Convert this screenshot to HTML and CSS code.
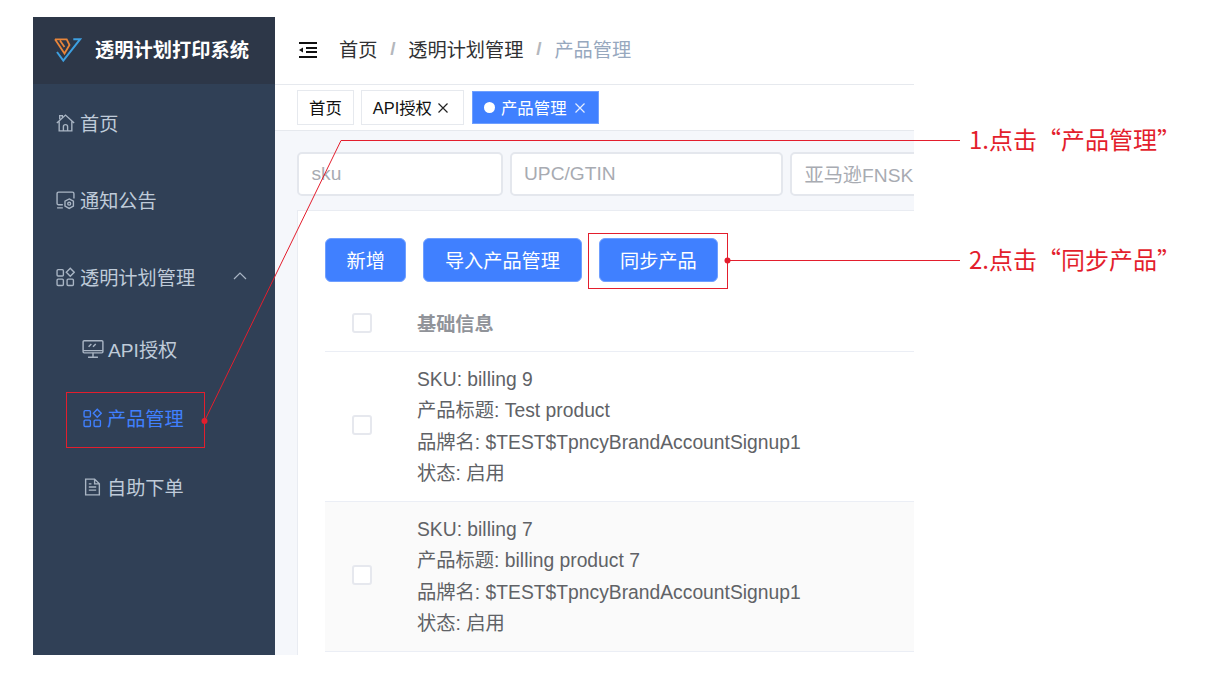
FILE: index.html
```html
<!DOCTYPE html>
<html lang="zh-CN">
<head>
<meta charset="utf-8">
<title>透明计划打印系统</title>
<link rel="stylesheet" href="styles.css">
</head>
<body>
<div class="app">
  <aside class="sidebar">
    <div class="brand">
      <svg class="brand-logo" viewBox="0 0 28 26" width="28" height="26"><path d="M1 1.3H12.7L15.5 7L10.5 15.5L1 1.3M6 2.5L10.5 9" fill="none" stroke="#e8853a" stroke-width="1.8"/><path d="M3 14L9.3 22.5L26 1.3H19.3" fill="none" stroke="#3d9fe0" stroke-width="2"/></svg>
      <span class="brand-title">透明计划打印系统</span>
    </div>
    <nav class="menu">
      <div class="menu-item"><svg class="mi" viewBox="0 0 18 18"><path d="M.8 9L9 1.5L17.2 9M3.5 5.5V2H6V3.5M3 7.5V16.5H15V7.5M7 16.5V12.5Q7 10.5 9 10.5T11 12.5V16.5"/></svg><span>首页</span></div>
      <div class="menu-item"><svg class="mi" viewBox="0 0 18 18"><path d="M6.5 13.5H2.5Q1 13.5 1 12V3Q1 1.5 2.5 1.5H15.5Q17 1.5 17 3V7.5M1 16.5H6.5"/><path d="M12.5 8L16.5 10.2V14.8L12.5 17L8.5 14.8V10.2Z"/><circle cx="12.5" cy="12.5" r="1.4"/></svg><span>通知公告</span></div>
      <div class="menu-item"><svg class="mi" viewBox="0 0 18 18"><rect x="1" y="2" width="6" height="6" rx="1"/><rect x="1" y="11" width="6" height="6" rx="1"/><rect x="10.5" y="11" width="6" height="6" rx="1"/><path d="M13.5 .8L17.2 4.5L13.5 8.2L9.8 4.5Z"/></svg><span>透明计划管理</span><svg class="chev" viewBox="0 0 14 8"><path d="M1 7L7 1L13 7"/></svg></div>
      <div class="menu-item sub"><svg class="mi wide" viewBox="0 0 20 18"><rect x="1" y="1.5" width="18" height="11" rx="1"/><path d="M1 10.5H19M10 12.5V16M5.5 16.5H14.5M6 7L8.5 4.5M10 7L12.5 4.5"/></svg><span>API授权</span></div>
      <div class="menu-item sub active"><svg class="mi" viewBox="0 0 18 18"><rect x="1" y="2" width="6" height="6" rx="1"/><rect x="1" y="11" width="6" height="6" rx="1"/><rect x="10.5" y="11" width="6" height="6" rx="1"/><path d="M13.5 .8L17.2 4.5L13.5 8.2L9.8 4.5Z"/></svg><span>产品管理</span></div>
      <div class="menu-item sub"><svg class="mi" viewBox="0 0 18 18"><path d="M2.5 1.5H11L15.5 6V16.5H2.5ZM11 1.5V6H15.5M5.5 9H12.5M5.5 12H12.5M5.5 6H8"/></svg><span>自助下单</span></div>
    </nav>
  </aside>
  <main class="main">
    <header class="topbar">
      <svg class="fold" viewBox="0 0 18 16" width="18" height="16"><path d="M0 1H18M7 6H18M7 10H18M0 15H18" stroke="#111" stroke-width="2" fill="none"/><path d="M0 8L4 5.5V10.5Z" fill="#111"/></svg>
      <span class="crumb strong">首页</span><span class="sep">/</span>
      <span class="crumb strong">透明计划管理</span><span class="sep">/</span>
      <span class="crumb muted">产品管理</span>
    </header>
    <div class="tags">
      <span class="tag">首页</span>
      <span class="tag closable">API授权<svg class="close" viewBox="0 0 10 10"><path d="M.5 .5L9.5 9.5M9.5 .5L.5 9.5"/></svg></span>
      <span class="tag current"><i class="bullet"></i>产品管理<svg class="close" viewBox="0 0 10 10"><path d="M.5 .5L9.5 9.5M9.5 .5L.5 9.5"/></svg></span>
    </div>
    <div class="content">
      <div class="filters">
        <div class="field f1">sku</div>
        <div class="field f2">UPC/GTIN</div>
        <div class="field f3">亚马逊FNSKU</div>
      </div>
      <section class="card">
        <div class="actions">
          <button class="btn">新增</button>
          <button class="btn">导入产品管理</button>
          <button class="btn">同步产品</button>
        </div>
        <div class="thead"><span class="check"></span><span class="th">基础信息</span></div>
        <div class="row">
          <span class="check"></span>
          <div class="cell"><p>SKU: billing 9</p><p>产品标题: Test product</p><p>品牌名: $TEST$TpncyBrandAccountSignup1</p><p>状态: 启用</p></div>
        </div>
        <div class="row alt">
          <span class="check"></span>
          <div class="cell"><p>SKU: billing 7</p><p>产品标题: billing product 7</p><p>品牌名: $TEST$TpncyBrandAccountSignup1</p><p>状态: 启用</p></div>
        </div>
      </section>
    </div>
  </main>
</div>
<svg class="marks" viewBox="0 0 1216 686" width="1216" height="686">
  <rect x="66.5" y="392.5" width="138" height="55"/>
  <rect x="588.5" y="233.5" width="139" height="55"/>
  <path d="M204.5 421L341 140.5H960M727 260.5H960"/>
  <circle cx="204.5" cy="421" r="3"/>
  <circle cx="727.5" cy="260.5" r="3"/>
</svg>
<div class="note n1">1.点击“产品管理”</div>
<div class="note n2">2.点击“同步产品”</div>
</body>
</html>
```
FILE: styles.css
```css
* { box-sizing: border-box; }
html, body { margin: 0; background: #fff; }
body {
  position: relative;
  width: 1216px;
  height: 686px;
  padding: 17px 0 0 33px;
  overflow: hidden;
  font-family: "Liberation Sans", "Noto Sans CJK SC", sans-serif;
  font-size: 19.2px;
}
.app { display: flex; width: 881px; height: 638px; overflow: hidden; }

.sidebar { width: 242px; flex: none; background: #304056; color: #bfcbd9; }
.brand { height: 67px; background: #2d3748; display: flex; align-items: center; padding-left: 21px; gap: 13px; }
.brand-logo { flex: none; }
.brand-title { color: #fff; font-weight: 700; font-size: 19.25px; padding-bottom: 4px; }
.menu-item { height: 77px; display: flex; align-items: center; padding-left: 23px; gap: 5px; position: relative; }
.menu-item.sub { height: 68.7px; padding-left: 50px; }
.menu-item.active { color: #4080ff; }
.mi { width: 19px; height: 20px; flex: none; fill: none; stroke: #a9b5c4; stroke-width: 1.3; }
.active .mi { stroke: #4080ff; }
.mi.wide { width: 22px; margin-left: -1px; margin-right: -1px; }
.chev { position: absolute; right: 28px; top: 34px; width: 14px; height: 8px; fill: none; stroke: #a9b5c4; stroke-width: 1.2; }

.main { flex: 1; min-width: 0; display: flex; flex-direction: column; }
.topbar { height: 68px; flex: none; display: flex; align-items: center; padding: 0 0 4px 24px; border-bottom: 1px solid #e6e9ee; color: #303133; }
.fold { margin: 3px 22px 0 0; flex: none; }
.sep { margin: 0 12.8px; color: #b4b7bd; font-weight: 700; }
.crumb.muted { color: #97a8be; }
.tags { height: 46px; flex: none; display: flex; align-items: center; gap: 7px; padding-left: 22px; border-bottom: 1px solid #e6e9ee; font-size: 16.4px; color: #111; }
.tag { height: 35px; display: flex; align-items: center; padding: 0 11px 2px; border: 1px solid #e6e9ee; background: #fff; }
.tag.closable { padding-right: 14.5px; }
.tag.current { height: 33px; background: #4080ff; border-color: #6f9fff; color: #fff; margin-left: 1px; padding: 0 13px 2px 11px; }
.bullet { width: 11px; height: 11px; border-radius: 50%; background: #fff; margin: 2px 6px 0 0; }
.close { width: 10px; height: 10px; margin: 2px 0 0 6.5px; flex: none; fill: none; stroke: #222; stroke-width: 1.2; }
.current .close { margin-left: 8px; stroke: #e6eeff; }

.content { flex: 1; min-height: 0; background: #f5f7fb; padding-left: 22px; display: flex; flex-direction: column; overflow: hidden; }
.filters { display: flex; gap: 7px; padding-top: 21px; height: 80px; flex: none; border-bottom: 1px solid #e9ecf2; }
.field { height: 44px; flex: none; background: #fff; border: 2px solid #e4e7ed; border-radius: 5px; display: flex; align-items: center; padding-left: 12.5px; color: #a8abb2; white-space: nowrap; }
.f1 { width: 205.5px; }
.f2 { width: 273.5px; }
.f3 { width: 240px; }

.card { flex: 1; background: #fff; border-left: 1px solid #e9ecf2; padding: 27px 0 0 27px; }
.actions { display: flex; gap: 17px; }
.btn { height: 44px; padding: 0 20.5px; border: 1px solid #6f9fff; border-radius: 6px; background: #4080ff; color: #fff; font: inherit; }
.thead { height: 70px; display: flex; align-items: center; padding-top: 12px; border-bottom: 1px solid #ebeef5; }
.check { width: 20px; height: 20px; flex: none; margin-left: 27px; background: #fff; border: 2px solid #e6e8ee; border-radius: 3px; }
.row .check { margin-bottom: 3px; }
.th { margin-left: 45px; font-weight: 700; color: #909399; }
.row { height: 150px; display: flex; align-items: center; border-bottom: 1px solid #ebeef5; }
.row.alt { background: #fafafa; }
.cell { margin-left: 45px; color: #606266; font-size: 19.3px; }
.cell p { margin: 0; line-height: 31.5px; white-space: nowrap; }

.marks { position: absolute; left: 0; top: 0; pointer-events: none; }
.marks rect, .marks path { fill: none; stroke: #e31e2d; stroke-width: 1; }
.marks circle { fill: #e31e2d; }
.note { position: absolute; left: 969px; color: #e31e2d; font-family: "Noto Sans CJK SC", sans-serif; font-size: 24px; line-height: 34px; white-space: nowrap; }
.n1 { top: 122px; }
.n2 { top: 242px; }
```
